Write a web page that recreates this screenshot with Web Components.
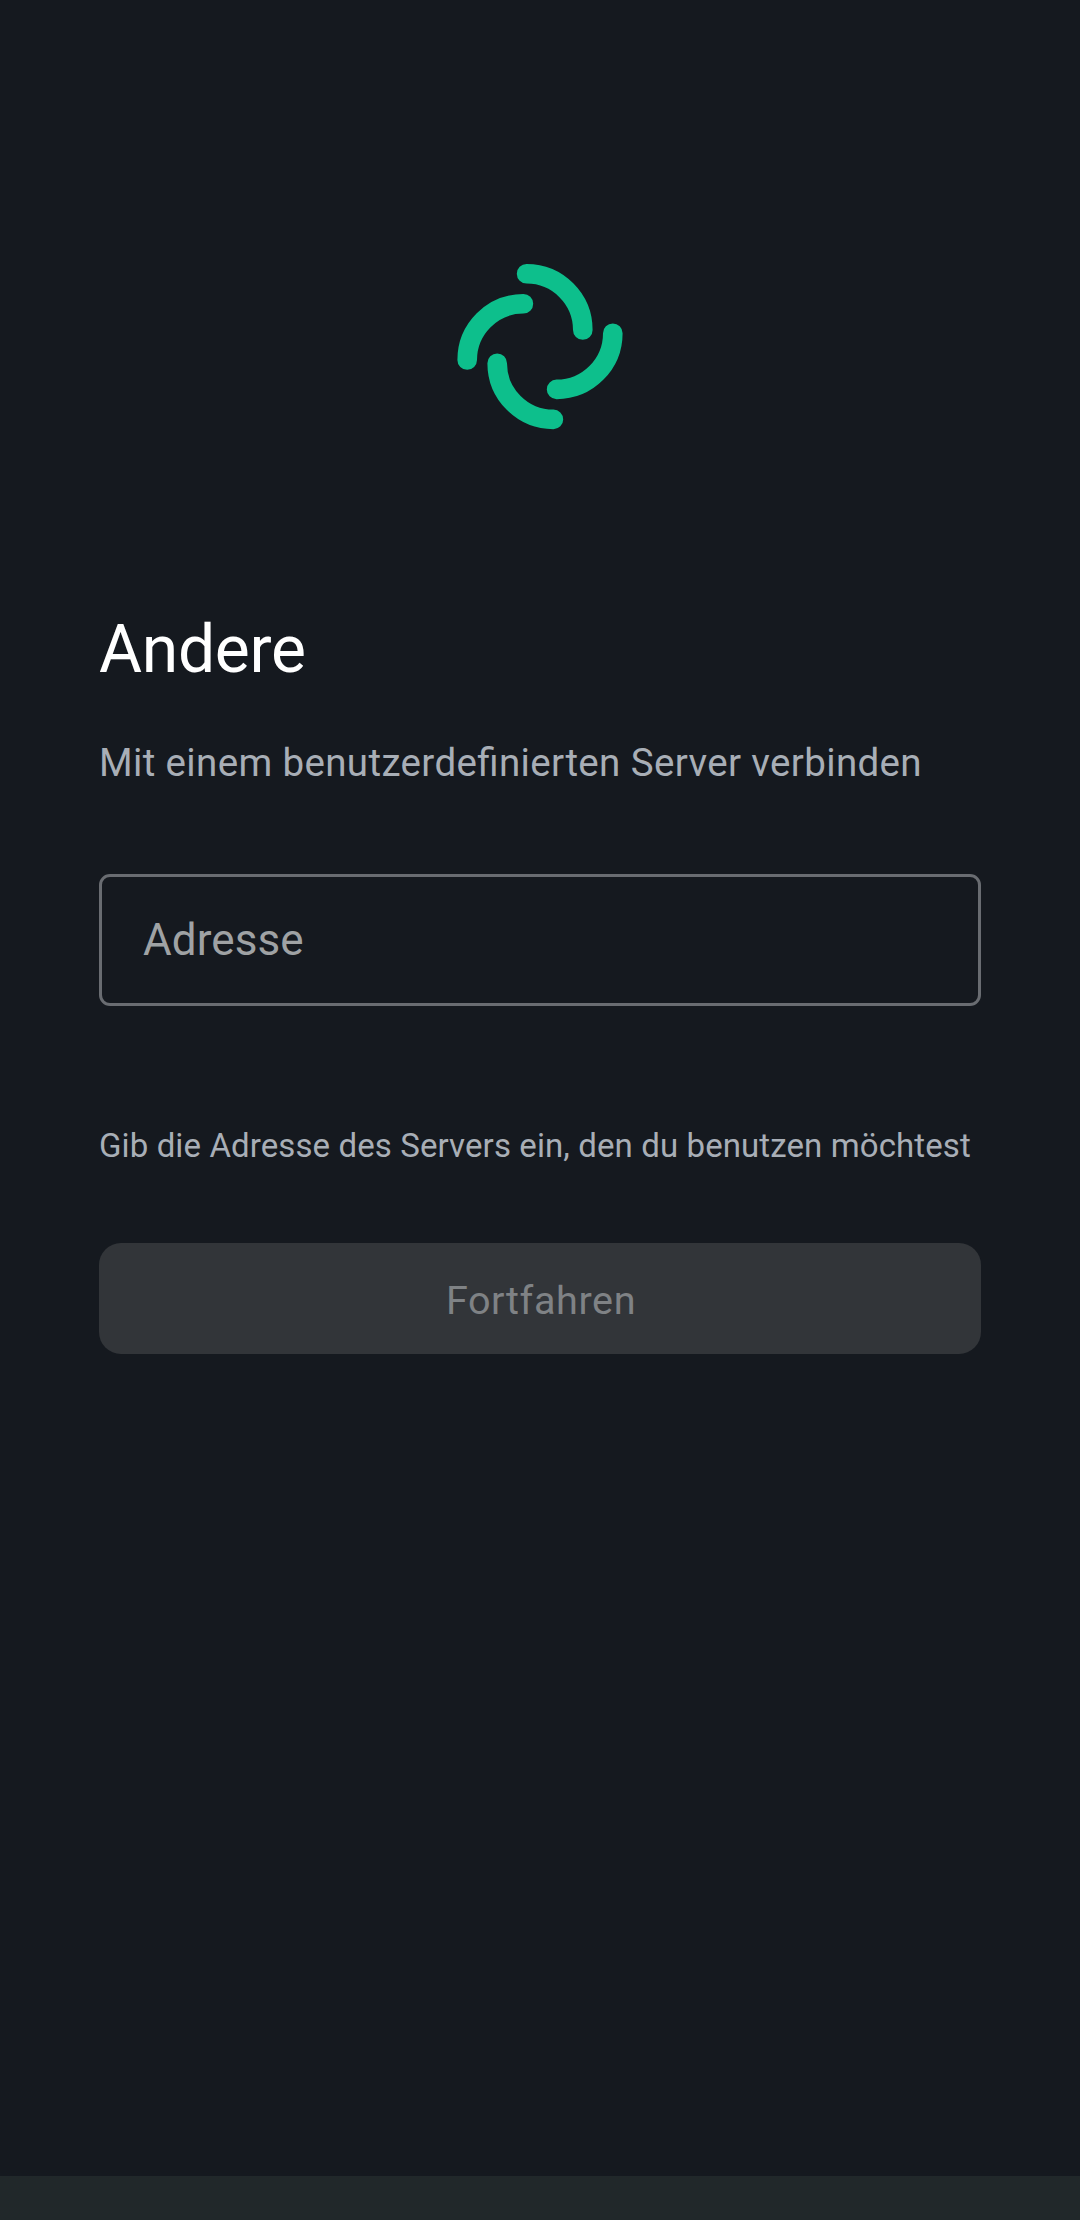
<!DOCTYPE html>
<html lang="de">
<head>
<meta charset="utf-8">
<title>Server auswählen</title>
<style>
html, body { margin: 0; background: #15191f; }
</style>
</head>
<body>
<server-screen>
  <app-logo slot="logo"></app-logo>
  <form-heading>
    <span slot="title">Andere</span>
    <span slot="subtitle">Mit einem benutzerdefinierten Server verbinden</span>
  </form-heading>
  <outlined-field>Adresse</outlined-field>
  <field-notice>Gib die Adresse des Servers ein, den du benutzen möchtest</field-notice>
  <submit-button>Fortfahren</submit-button>
</server-screen>
<script>
function define(name, html) {
  const template = document.createElement('template');
  template.innerHTML = html;
  customElements.define(name, class extends HTMLElement {
    constructor() {
      super();
      this.attachShadow({ mode: 'open' }).append(template.content.cloneNode(true));
    }
  });
}

define('server-screen', `
  <style>
    :host { display: flex; flex-direction: column; width: 1080px; height: 2220px; overflow: hidden;
      background: #15191f; color: #a8aeb6; font-family: Roboto, "Noto Sans", sans-serif; }
    header { display: flex; justify-content: center; padding-top: 254px; height: 357px; box-sizing: content-box; }
    main { flex: 1; display: flex; flex-direction: column; padding: 0 99px; }
    footer { height: 44px; background: #21282a; }
  </style>
  <header><slot name="logo"></slot></header>
  <main><slot></slot></main>
  <footer></footer>`);

define('app-logo', `
  <style>
    :host { display: block; width: 186px; height: 186px; }
    svg { display: block; }
  </style>
  <svg width="186" height="186" viewBox="-93 -92.6 186 186" fill="none" stroke="#0dbf8c" stroke-width="19.6" stroke-linecap="round">
    <path id="arc" d="M-13.4 -72.8A56.2 56.2 0 0 1 42.8 -16.6"/>
    <use href="#arc" transform="rotate(90)"/>
    <use href="#arc" transform="rotate(180)"/>
    <use href="#arc" transform="rotate(270)"/>
  </svg>`);

define('form-heading', `
  <style>
    :host { display: flex; flex-direction: column; gap: 51px; }
    h1, p { margin: 0; font-weight: 400; white-space: nowrap; }
    h1 { color: #fff; font-size: 66px; line-height: 78px; letter-spacing: -0.3px; }
    p { font-size: 38.5px; line-height: 46px; letter-spacing: 0.36px; font-feature-settings: "liga" 1; }
  </style>
  <h1><slot name="title"></slot></h1>
  <p><slot name="subtitle"></slot></p>`);

define('outlined-field', `
  <style>
    :host { display: flex; align-items: center; box-sizing: border-box; height: 132px; margin-top: 88px;
      padding: 0 41px; border: 3px solid #696c71; border-radius: 11px; color: #9fa2a4;
      font-size: 44px; line-height: 52px; letter-spacing: 0.1px; }
  </style>
  <slot></slot>`);

define('field-notice', `
  <style>
    :host { display: block; margin-top: 120px; font-size: 33px; line-height: 40px; letter-spacing: 0.105px; white-space: nowrap; }
  </style>
  <slot></slot>`);

define('submit-button', `
  <style>
    :host { display: block; margin-top: 77px; }
    button { display: flex; align-items: center; justify-content: center; box-sizing: border-box;
      width: 100%; height: 111px; padding: 4px 0 0 2px; border: 0; border-radius: 22px;
      background: #323539; color: #7f8285; font: 400 39.6px/46px Roboto, sans-serif; letter-spacing: 0.58px; }
  </style>
  <button type="button" disabled><slot></slot></button>`);
</script>
</body>
</html>
